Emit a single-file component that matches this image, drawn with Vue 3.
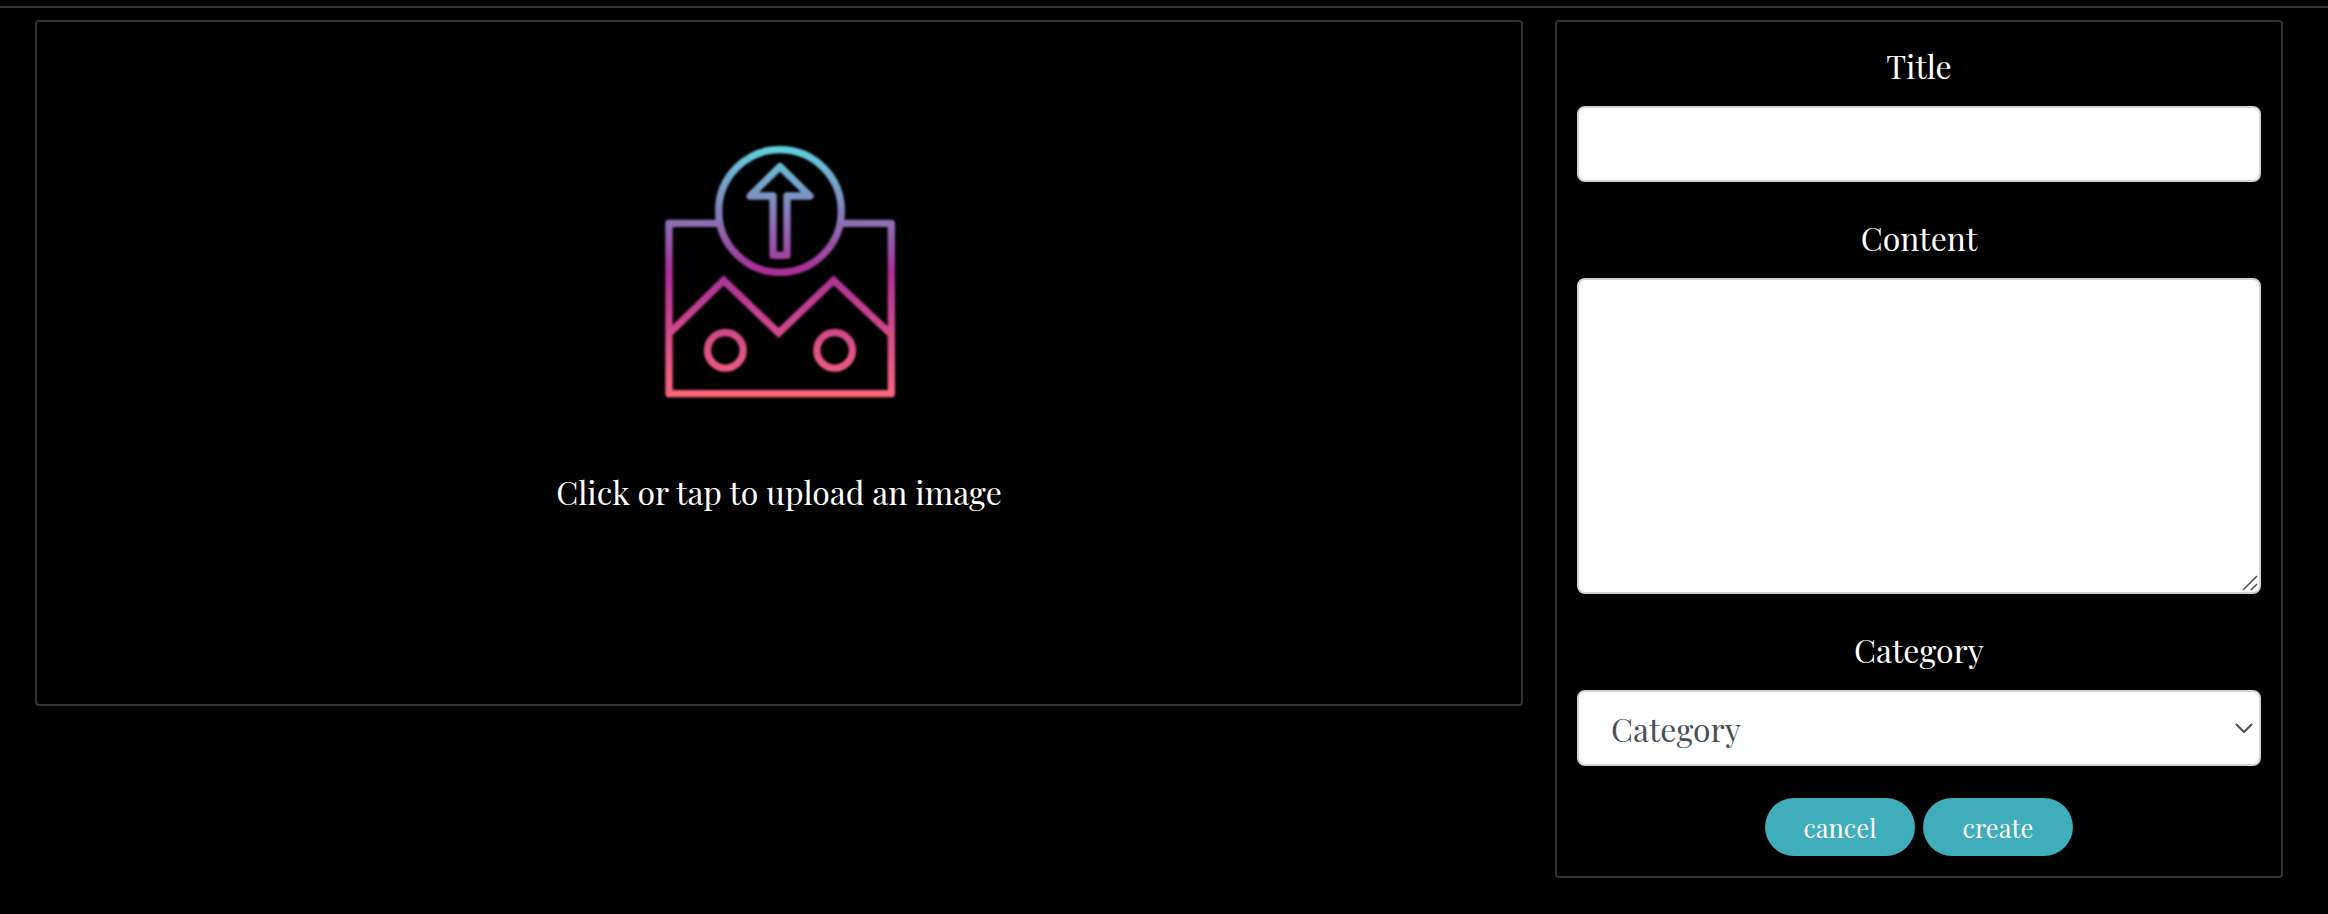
<script setup>
import { ref } from 'vue'

const title = ref('')
const content = ref('')
</script>

<template>
  <main class="page">
    <section class="panel upload">
      <svg class="upload-icon" viewBox="0 0 840 840" aria-hidden="true">
        <defs>
          <linearGradient id="upload-stroke" gradientUnits="userSpaceOnUse" x1="0" y1="47" x2="0" y2="802">
            <stop offset="0" stop-color="#5fd5e0" />
            <stop offset="0.5" stop-color="#aa3098" />
            <stop offset="1" stop-color="#fc667a" />
          </linearGradient>
        </defs>
        <g class="strokes" stroke="url(#upload-stroke)">
          <path d="M236 280H87V791H754V280H605" />
          <circle cx="420" cy="243" r="184" />
          <path d="M420 110L510 198H441V376H399V198H330Z" />
          <path d="M91 607L251 451L416 609L581 451L750 610" stroke-linejoin="miter" />
          <circle cx="256" cy="661" r="53.5" />
          <circle cx="584" cy="661" r="53.5" />
        </g>
      </svg>
      <p class="upload-text">Click or tap to upload an image</p>
    </section>

    <form class="panel form" @submit.prevent>
      <div class="group">
        <label class="label" for="title">Title</label>
        <input id="title" v-model="title" class="control" type="text" />
      </div>
      <div class="group">
        <label class="label" for="content">Content</label>
        <div class="area">
          <textarea id="content" v-model="content" class="control"></textarea>
          <svg class="grip" viewBox="0 0 16 16" aria-hidden="true">
            <path d="M1 15L15 1M9 15L15 9" />
          </svg>
        </div>
      </div>
      <div class="group">
        <label class="label">Category</label>
        <div class="control select" role="combobox" tabindex="0">
          <span class="select-value">Category</span>
          <svg class="chevron" viewBox="0 0 20 12" aria-hidden="true">
            <path d="M2 2L10 10L18 2" />
          </svg>
        </div>
      </div>
      <div class="actions">
        <button class="btn" type="button">cancel</button>
        <button class="btn" type="submit">create</button>
      </div>
    </form>
  </main>
</template>

<style>
html,
body {
  background: #000;
}
</style>

<style scoped>
.page {
  box-sizing: border-box;
  height: 914px;
  margin: 0;
  padding: 6px 45px 0 35px;
  display: grid;
  grid-template-columns: 1488px 728px;
  column-gap: 32px;
  align-items: start;
  background: linear-gradient(#333, #333) 0 6px / 100% 2px no-repeat #000;
  color: #fff;
  font-family: "Playfair Display", "Liberation Serif", serif;
  font-size: 32px;
  line-height: 48px;
}

.panel {
  box-sizing: border-box;
  margin-top: 14px;
  border: 2px solid #333;
  border-radius: 4px;
}

.upload {
  height: 686px;
  padding-top: 108px;
  display: flex;
  flex-direction: column;
  align-items: center;
}

.upload-icon {
  width: 280px;
  height: 280px;
  margin-left: 2px;
}

.strokes {
  fill: none;
  stroke-width: 22;
  stroke-linejoin: round;
  filter: blur(2.4px);
}

.upload-text {
  margin: 58px 0 0;
}

.form {
  height: 858px;
  padding: 20px;
}

.group {
  display: flex;
  flex-direction: column;
  margin-bottom: 32px;
}

.label {
  height: 64px;
  text-align: center;
}

.control {
  box-sizing: border-box;
  display: block;
  width: 100%;
  height: 76px;
  margin: 0;
  padding: 12px 32px;
  border: 2px solid #ced4da;
  border-radius: 8px;
  outline: none;
  background: #fff;
  color: #495057;
  font: inherit;
}

.area {
  position: relative;
}

textarea.control {
  height: 316px;
  resize: none;
}

.grip {
  position: absolute;
  right: 3px;
  bottom: 3px;
  width: 16px;
  height: 16px;
  fill: none;
  stroke: #4c4c4c;
  stroke-width: 1.5;
}

.select {
  display: flex;
  align-items: center;
  justify-content: space-between;
  padding: 0 5px 0 32px;
}

.select-value {
  padding-top: 2px;
}

.chevron {
  width: 20px;
  height: 12px;
  fill: none;
  stroke: #495057;
  stroke-width: 2;
}

.actions {
  display: flex;
  justify-content: center;
  gap: 8px;
}

.btn {
  width: 150px;
  height: 58px;
  padding: 0;
  border: 0;
  border-radius: 29px;
  background: #3fadba;
  color: #fff;
  font-family: inherit;
  font-size: 25.6px;
  line-height: 58px;
}
</style>
